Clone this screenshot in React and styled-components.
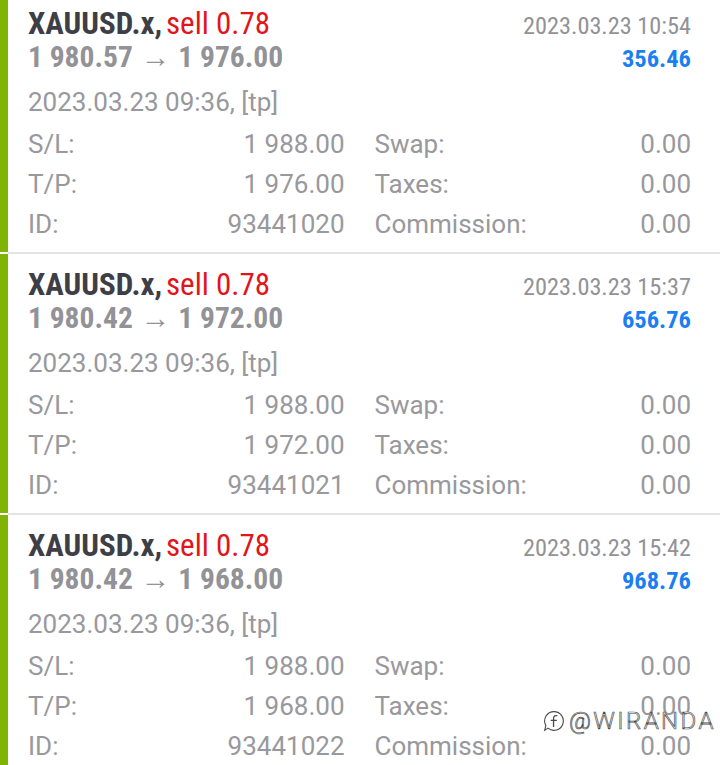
import React from "react";
import styled, { createGlobalStyle } from "styled-components";

const GlobalStyle = createGlobalStyle`
  html, body {
    margin: 0;
    padding: 0;
    background: #ffffff;
  }
  body {
    font-family: "Roboto", "Liberation Sans", sans-serif;
    overflow: hidden;
  }
`;

const condensed = `"Roboto Condensed", "Roboto", "Liberation Sans", sans-serif`;

const Page = styled.div`
  position: relative;
  width: 720px;
  height: 765px;
  overflow: hidden;
`;

const List = styled.div`
  margin-top: -7px;
  display: flex;
  flex-direction: column;
`;

const Card = styled.div`
  display: flex;
  height: 259px;
`;

const Bar = styled.div`
  width: 8px;
  flex: none;
  background: #7fb402;
`;

const Body = styled.div`
  flex: 1;
  padding: 14px 29px 7px 20px;
  display: flex;
  flex-direction: column;
`;

const Divider = styled.div`
  height: 2px;
  margin-left: 8px;
  background: #e4e4e6;
`;

const HeadRow = styled.div`
  display: flex;
  justify-content: space-between;
  align-items: baseline;
  line-height: ${(p) => p.$lh}px;
  height: ${(p) => p.$lh}px;
`;

const Symbol = styled.span`
  font-family: ${condensed};
  font-stretch: condensed;
  font-size: 31px;
  font-weight: 700;
  color: #3e3e46;
`;

const Side = styled.span`
  font-family: ${condensed};
  font-stretch: condensed;
  font-size: 31px;
  font-weight: 400;
  color: #e2151b;
`;

const Prices = styled.span`
  font-family: ${condensed};
  font-stretch: condensed;
  font-size: 29.5px;
  font-weight: 700;
  color: #929297;
`;

const Arrow = styled.span`
  font-weight: 400;
  margin: 0 8px;
`;

const CloseTime = styled.span`
  font-family: ${condensed};
  font-stretch: condensed;
  font-size: 24.3px;
  color: #929297;
`;

const Profit = styled.span`
  font-family: ${condensed};
  font-stretch: condensed;
  font-size: 24.5px;
  font-weight: 700;
  color: #1a7ff2;
`;

const OpenTime = styled.div`
  margin-top: 5px;
  font-size: 26px;
  line-height: 44px;
  color: #98989d;
`;

const Details = styled.div`
  display: grid;
  grid-template-columns: 1fr 1fr;
  column-gap: 30px;
`;

const Field = styled.div`
  display: flex;
  justify-content: space-between;
  font-size: 26px;
  line-height: 40px;
  color: #98989d;
`;

const Watermark = styled.div`
  position: absolute;
  left: 543px;
  top: 707px;
  display: flex;
  align-items: center;
  gap: 4px;
  font-family: "Roboto", sans-serif;
  font-weight: 300;
  font-size: 24px;
  letter-spacing: 2.4px;
  color: #ffffff;
  -webkit-text-stroke: 0.7px #4a4a4a;
`;

const deals = [
  {
    id: "93441020",
    open: "1 980.57",
    close: "1 976.00",
    closeTime: "2023.03.23 10:54",
    profit: "356.46",
    sl: "1 988.00",
    tp: "1 976.00",
  },
  {
    id: "93441021",
    open: "1 980.42",
    close: "1 972.00",
    closeTime: "2023.03.23 15:37",
    profit: "656.76",
    sl: "1 988.00",
    tp: "1 972.00",
  },
  {
    id: "93441022",
    open: "1 980.42",
    close: "1 968.00",
    closeTime: "2023.03.23 15:42",
    profit: "968.76",
    sl: "1 988.00",
    tp: "1 968.00",
  },
];

const Deal = ({ deal }) => (
  <Card>
    <Bar />
    <Body>
      <HeadRow $lh={33}>
        <span>
          <Symbol>XAUUSD.x,</Symbol> <Side>sell 0.78</Side>
        </span>
        <CloseTime>{deal.closeTime}</CloseTime>
      </HeadRow>
      <HeadRow $lh={35}>
        <Prices>
          {deal.open}
          <Arrow>→</Arrow>
          {deal.close}
        </Prices>
        <Profit>{deal.profit}</Profit>
      </HeadRow>
      <OpenTime>2023.03.23 09:36, [tp]</OpenTime>
      <Details>
        <Field>
          <span>S/L:</span>
          <span>{deal.sl}</span>
        </Field>
        <Field>
          <span>Swap:</span>
          <span>0.00</span>
        </Field>
        <Field>
          <span>T/P:</span>
          <span>{deal.tp}</span>
        </Field>
        <Field>
          <span>Taxes:</span>
          <span>0.00</span>
        </Field>
        <Field>
          <span>ID:</span>
          <span>{deal.id}</span>
        </Field>
        <Field>
          <span>Commission:</span>
          <span>0.00</span>
        </Field>
      </Details>
    </Body>
  </Card>
);

const Logo = () => (
  <svg width="22" height="22" viewBox="0 0 20 20" fill="none">
    <path
      d="M10 1.5 A8.5 8.5 0 1 1 4.5 16.5 L1.5 18.5 L2.6 14.2 A8.5 8.5 0 0 1 10 1.5 Z"
      stroke="#4a4a4a"
      strokeWidth="1"
      fill="#ffffff"
    />
    <path
      d="M13 5.2 C10.6 4.6 9.6 5.8 9.6 8 L9.6 15.5 M7 9.4 L12.6 9.4"
      stroke="#4a4a4a"
      strokeWidth="1.2"
      fill="none"
    />
  </svg>
);

const App = () => (
  <Page>
    <GlobalStyle />
    <List>
      {deals.map((d, i) => (
        <React.Fragment key={d.id}>
          {i > 0 && <Divider />}
          <Deal deal={d} />
        </React.Fragment>
      ))}
    </List>
    <Watermark>
      <Logo />
      <span>@WIRANDA</span>
    </Watermark>
  </Page>
);

export default App;
